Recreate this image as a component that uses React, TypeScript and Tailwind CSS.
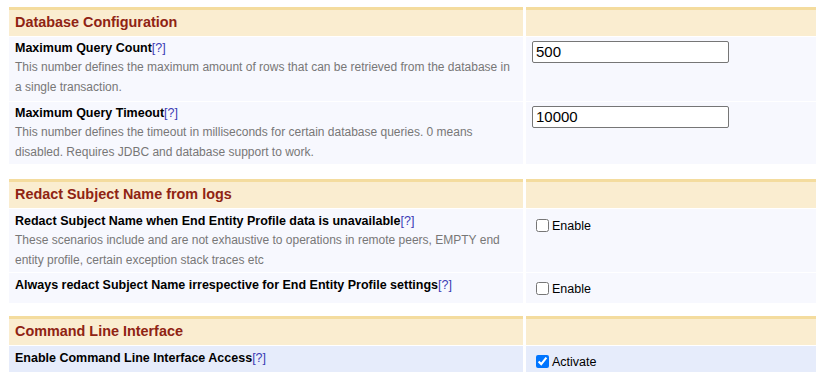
import React from 'react';

type Row = {
	title: string;
	desc?: string[];
	control: React.ReactNode;
	height: string;
	pad: string;
	ctrlPad: string;
	highlight?: boolean;
};

type Section = {
	heading: string;
	margin: string;
	rows: Row[];
};

function TextField({ value }: { value: string }) {
	return (
		<input
			type="text"
			defaultValue={value}
			className="w-[197px] h-[22px] border border-[#767676] rounded-[2px] bg-white px-[3px] text-[15px] text-black outline-none"
		/>
	);
}

function Check({ label, checked }: { label: string; checked?: boolean }) {
	return (
		<label className="flex items-center gap-[3px] text-[12.5px] text-black">
			<input type="checkbox" defaultChecked={checked} className="w-[13px] h-[13px] m-0" />
			<span className="pt-[2px] leading-[14px]">{label}</span>
		</label>
	);
}

const sections: Section[] = [
	{
		heading: 'Database Configuration',
		margin: 'mt-0',
		rows: [
			{
				title: 'Maximum Query Count',
				desc: [
					'This number defines the maximum amount of rows that can be retrieved from the database in',
					'a single transaction.',
				],
				control: <TextField value="500" />,
				height: 'h-[64px]',
				pad: 'pt-[1px]',
				ctrlPad: 'pt-[3px] pl-[6px]',
			},
			{
				title: 'Maximum Query Timeout',
				desc: [
					'This number defines the timeout in milliseconds for certain database queries. 0 means',
					'disabled. Requires JDBC and database support to work.',
				],
				control: <TextField value="10000" />,
				height: 'h-[62px]',
				pad: 'pt-[1px]',
				ctrlPad: 'pt-[3px] pl-[6px]',
			},
		],
	},
	{
		heading: 'Redact Subject Name from logs',
		margin: 'mt-[15px]',
		rows: [
			{
				title: 'Redact Subject Name when End Entity Profile data is unavailable',
				desc: [
					'These scenarios include and are not exhaustive to operations in remote peers, EMPTY end',
					'entity profile, certain exception stack traces etc',
				],
				control: <Check label="Enable" />,
				height: 'h-[63px]',
				pad: 'pt-[2px]',
				ctrlPad: 'pt-[8px] pl-[10px]',
			},
			{
				title: 'Always redact Subject Name irrespective for End Entity Profile settings',
				control: <Check label="Enable" />,
				height: 'h-[30px]',
				pad: 'pt-[2px]',
				ctrlPad: 'pt-[7px] pl-[10px]',
			},
		],
	},
	{
		heading: 'Command Line Interface',
		margin: 'mt-[13px]',
		rows: [
			{
				title: 'Enable Command Line Interface Access',
				control: <Check label="Activate" checked />,
				height: 'h-[30px]',
				pad: 'pt-[2px]',
				ctrlPad: 'pt-[7px] pl-[10px]',
				highlight: true,
			},
		],
	},
];

export default function App() {
	return (
		<div className="w-[816px] h-[372px] overflow-hidden bg-white pt-[7px] pl-[9px] font-['Liberation_Sans',Arial,sans-serif]">
			{sections.map((section) => (
				<div
					key={section.heading}
					className={`grid grid-cols-[514px_1fr] gap-x-[3px] gap-y-[1px] ${section.margin}`}
				>
					<div className="h-[29px] bg-[#faedd0] border-t-[3px] border-[#f4dc9e] pl-[6px] flex items-center text-[14.4px] font-bold text-[#8f2313]">
						{section.heading}
					</div>
					<div className="h-[29px] bg-[#faedd0] border-t-[3px] border-[#f4dc9e]" />

					{section.rows.map((row) => (
						<React.Fragment key={row.title}>
							<div
								className={`${row.height} ${row.pad} px-[6px] ${row.highlight ? 'bg-[#e6ecfb]' : 'bg-[#f7f8fe]'}`}
							>
								<div className="leading-[20px] text-[12.5px] font-bold text-black">
									{row.title}
									<span className="font-normal text-[#3b3bb5]">[?]</span>
								</div>
								{row.desc && (
									<div className="text-[12px] leading-[19.5px] text-[#777]">
										{row.desc.map((line) => (
											<div key={line}>{line}</div>
										))}
									</div>
								)}
							</div>
							<div className={`${row.height} ${row.ctrlPad} ${row.highlight ? 'bg-[#e6ecfb]' : 'bg-[#f7f8fe]'}`}>
								{row.control}
							</div>
						</React.Fragment>
					))}
				</div>
			))}
		</div>
	);
}
